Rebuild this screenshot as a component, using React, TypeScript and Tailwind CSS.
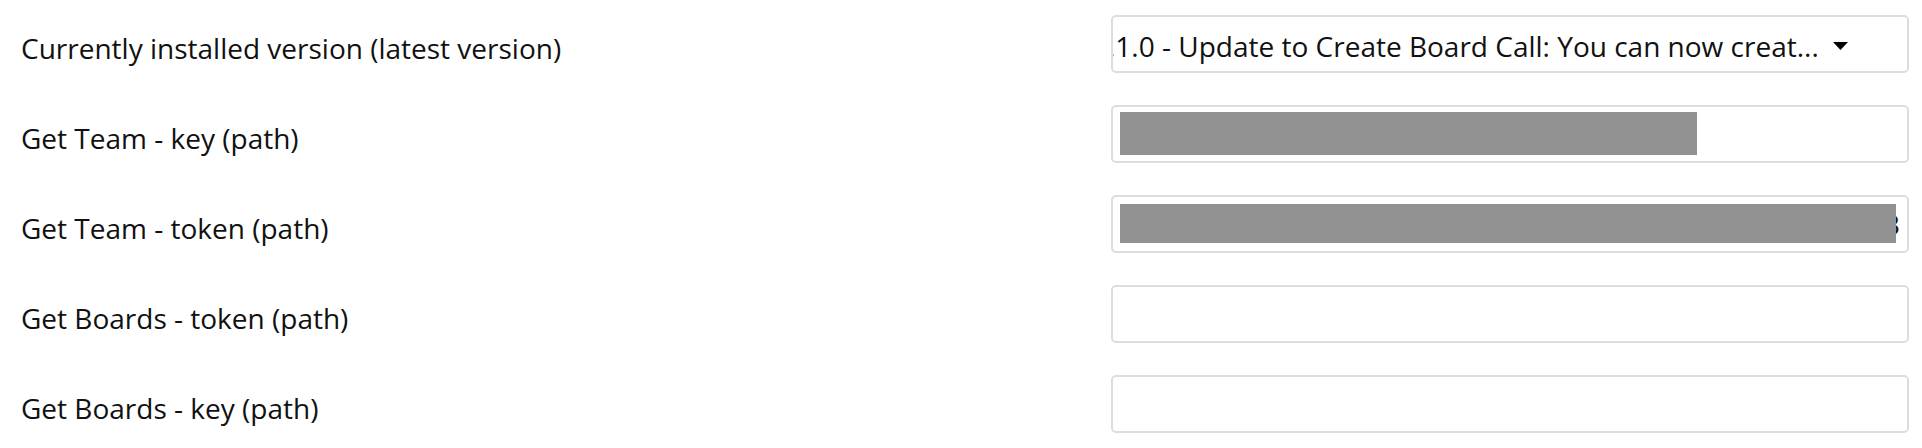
const rows = [
  { label: 'Currently installed version (latest version)', kind: 'select' },
  { label: 'Get Team - key (path)', kind: 'short' },
  { label: 'Get Team - token (path)', kind: 'long' },
  { label: 'Get Boards - token (path)', kind: 'empty' },
  { label: 'Get Boards - key (path)', kind: 'empty' },
];

function Field({ kind }: { kind: string }) {
  if (kind === 'select') {
    return (
      <div className="flex items-start w-[798px] h-[58px] border-2 border-[#dddddd] rounded-[5px] bg-white overflow-hidden">
        <span className="ml-[-5px] mt-[10px] w-[709px] shrink-0 whitespace-nowrap overflow-hidden leading-[38px]">
          .1.0 - Update to Create Board Call: You can now creat...
        </span>
        <svg className="ml-[16px] mt-[25px] shrink-0" width="15" height="8" viewBox="0 0 15 8">
          <path d="M0 0H15L7.5 8Z" fill="#000" />
        </svg>
      </div>
    );
  }
  return (
    <div className="relative flex items-start justify-end w-[798px] h-[58px] border-2 border-[#dddddd] rounded-[5px] bg-white overflow-hidden">
      {kind === 'long' && (
        <span className="mt-[8px] mr-[7px] w-[40px] text-right overflow-hidden whitespace-nowrap leading-[38px]">
          3
        </span>
      )}
      {kind === 'short' && (
        <div className="absolute left-[7px] top-[5px] w-[577px] h-[43px] bg-[#919191]" />
      )}
      {kind === 'long' && (
        <div className="absolute left-[7px] top-[7px] w-[776px] h-[39px] bg-[#919191]" />
      )}
    </div>
  );
}

export default function App() {
  return (
    <div className="w-[1922px] h-[448px] bg-white text-[#111111] text-[28px] font-['Open_Sans',sans-serif] flex flex-col gap-[32px] pt-[15px]">
      {rows.map((r) => (
        <div key={r.label} className="flex items-start h-[58px]">
          <div className="flex-1 pl-[21px] mt-[14px] leading-[38px] whitespace-nowrap">{r.label}</div>
          <div className="mr-[13px]">
            <Field kind={r.kind} />
          </div>
        </div>
      ))}
    </div>
  );
}
